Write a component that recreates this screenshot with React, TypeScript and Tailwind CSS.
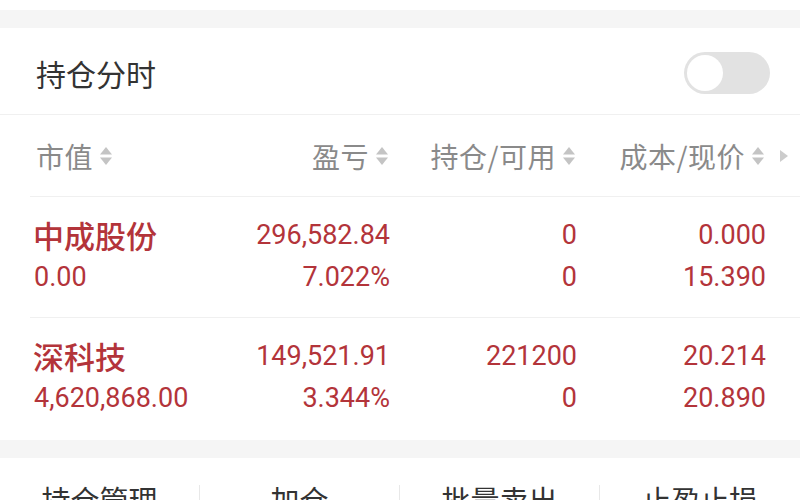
const CJK = '"Noto Sans CJK SC", "Noto Sans", sans-serif';
const NUM = 'Roboto, "Noto Sans CJK SC", sans-serif';

interface Holding {
  name: string;
  value: string;
  pnl: string;
  pnlPct: string;
  hold: string;
  avail: string;
  cost: string;
  price: string;
}

const holdings: Holding[] = [
  {
    name: '中成股份',
    value: '0.00',
    pnl: '296,582.84',
    pnlPct: '7.022%',
    hold: '0',
    avail: '0',
    cost: '0.000',
    price: '15.390',
  },
  {
    name: '深科技',
    value: '4,620,868.00',
    pnl: '149,521.91',
    pnlPct: '3.344%',
    hold: '221200',
    avail: '0',
    cost: '20.214',
    price: '20.890',
  },
];

function SortIcon() {
  return (
    <svg width="16" height="24" viewBox="0 0 16 24" className="ml-[5px] shrink-0">
      <path d="M8 3 L14 10.5 L2 10.5 Z" fill="#c4c4c4" />
      <path d="M2 13.5 L14 13.5 L8 21 Z" fill="#c4c4c4" />
    </svg>
  );
}

function HeaderCell({ label, right }: { label: string; right?: boolean }) {
  return (
    <div className={`flex items-center ${right ? 'justify-end' : 'justify-start'}`}>
      <span className="tracking-[0.5px]">{label}</span>
      <SortIcon />
    </div>
  );
}

export default function App() {
  const grid = 'grid grid-cols-[214px_140px_187px_189px]';

  return (
    <div className="w-[800px] h-[500px] overflow-hidden bg-white" style={{ fontFamily: CJK }}>
      <div className="h-[10px] bg-white" />
      <div className="h-[18px] bg-[#f5f5f5]" />

      {/* title row */}
      <div className="h-[87px] flex items-center justify-between pl-[36px] pr-[30px] pt-[4px] border-b border-[#f0f0f0]">
        <span className="text-[30px] text-[#333333] leading-none">持仓分时</span>
        <div className="w-[86px] h-[42px] rounded-full bg-[#e2e2e2] flex items-center px-[3px]">
          <div className="w-[36px] h-[36px] rounded-full bg-white" />
        </div>
      </div>

      {/* table header */}
      <div className="relative h-[82px] pl-[36px] flex items-center">
        <div className={`${grid} w-full text-[28px] text-[#8a8a8a] leading-none`}>
          <HeaderCell label="市值" />
          <HeaderCell label="盈亏" right />
          <HeaderCell label="持仓/可用" right />
          <HeaderCell label="成本/现价" right />
        </div>
        <svg width="10" height="14" viewBox="0 0 10 14" className="absolute left-[779px] top-[34px]">
          <path d="M1 1 L9 7 L1 13 Z" fill="#cccccc" />
        </svg>
        <div className="absolute left-[30px] right-0 bottom-0 h-px bg-[#f0f0f0]" />
      </div>

      {/* rows */}
      {holdings.map((h, i) => (
        <div
          key={h.name}
          className={`relative pl-[36px] flex items-center pb-[4px] ${i === 0 ? 'h-[121px]' : 'h-[122px]'}`}
        >
          <div className={`${grid} w-full text-[#b3343a] leading-[42px]`}>
            <div className="flex flex-col">
              <span className="text-[31px] font-medium -ml-[3px]" style={{ fontFamily: CJK }}>{h.name}</span>
              <span className="text-[27px] -ml-[2px]" style={{ fontFamily: NUM }}>{h.value}</span>
            </div>
            <div className="flex flex-col items-end text-[27px]" style={{ fontFamily: NUM }}>
              <span>{h.pnl}</span>
              <span>{h.pnlPct}</span>
            </div>
            <div className="flex flex-col items-end text-[27px]" style={{ fontFamily: NUM }}>
              <span>{h.hold}</span>
              <span>{h.avail}</span>
            </div>
            <div className="flex flex-col items-end text-[27px]" style={{ fontFamily: NUM }}>
              <span>{h.cost}</span>
              <span>{h.price}</span>
            </div>
          </div>
          {i === 0 && <div className="absolute left-[30px] right-0 bottom-0 h-px bg-[#f0f0f0]" />}
        </div>
      ))}

      <div className="h-[18px] bg-[#f5f5f5]" />

      {/* bottom actions */}
      <div className="grid grid-cols-4 pt-[27px]">
        {['持仓管理', '加仓', '批量卖出', '止盈止损'].map((t, i) => (
          <div
            key={t}
            className={`h-[60px] flex justify-center text-[29px] text-[#333333] leading-none ${
              i < 3 ? 'border-r border-[#e8e8e8]' : ''
            }`}
          >
            {t}
          </div>
        ))}
      </div>
    </div>
  );
}
